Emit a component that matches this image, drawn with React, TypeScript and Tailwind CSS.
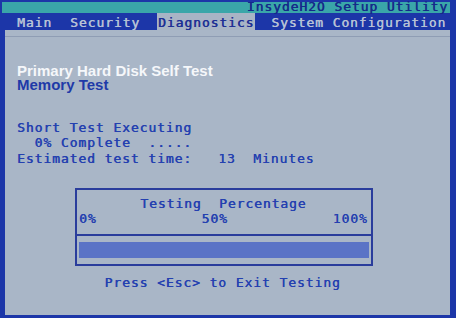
import React from "react";

const mono =
  "font-['DejaVu_Sans_Mono',monospace] text-[13px] tracking-[0.92px] whitespace-pre [text-shadow:0.45px_0_0_currentColor]";

export default function App() {
  return (
    <div className="w-[456px] h-[318px] bg-[#1c36a8] pt-[2px] pl-[2px] pr-[6px] pb-[3px] flex flex-col overflow-hidden">
      {/* Title bar */}
      <div className={`h-[11px] bg-[#3aa6a9] flex justify-end pr-[2px] ${mono} leading-[9px] text-[#15298a]`}>
        InsydeH2O Setup Utility
      </div>
      {/* Tabs */}
      <div className={`h-[17px] flex ${mono} text-[#b7c2d6]`}>
        <div className="ml-[15px] h-full pt-[1px] leading-[17px]">Main</div>
        <div className="ml-[18px] h-full pt-[1px] leading-[17px]">Security</div>
        <div className="ml-[17px] h-full pt-[1px] leading-[17px] px-[1px] bg-[#a8b4c5] text-[#1d2f94]">Diagnostics</div>
        <div className="ml-[16px] h-full pt-[1px] leading-[17px]">System Configuration</div>
      </div>
      {/* Body */}
      <div className="flex-1 bg-[#a9b6c7] border-l-[3px] border-[#1c36a8] flex flex-col">
        <div className="mt-[6px] h-px bg-[#8f9db4]" />
        <div className="pl-[12px] flex flex-col">
          <div className="mt-[26.5px] font-['Liberation_Sans',Arial,sans-serif] font-bold text-[15px] leading-[14px]">
            <div className="text-[#f5f7fa]">Primary Hard Disk Self Test</div>
            <div className="text-[#1f3aa8]">Memory Test</div>
          </div>
          <div className={`mt-[28.25px] ${mono} leading-[15.5px] text-[#2440b0]`}>
            <div>Short Test Executing</div>
            <div>{"  0% Complete  ....."}</div>
            <div>{"Estimated test time:   13  Minutes"}</div>
          </div>
          <div className="mt-[21.75px] ml-[58px] w-[298px] border-2 border-[#2a3d9c] flex flex-col">
            <div className={`pt-[6px] pb-[8px] pl-[2px] border-b-2 border-[#2a3d9c] ${mono} leading-[15px] text-[#2440b0]`}>
              <div>{"       Testing  Percentage"}</div>
              <div>{"0%            50%            100%"}</div>
            </div>
            <div className="mt-[6px] mb-[6px] mx-[2px] h-[16px] bg-[#5a73c6]" />
          </div>
          <div className={`mt-[9px] ${mono} leading-[15px] text-[#2440b0]`}>
            {"          Press <Esc> to Exit Testing"}
          </div>
        </div>
      </div>
    </div>
  );
}
